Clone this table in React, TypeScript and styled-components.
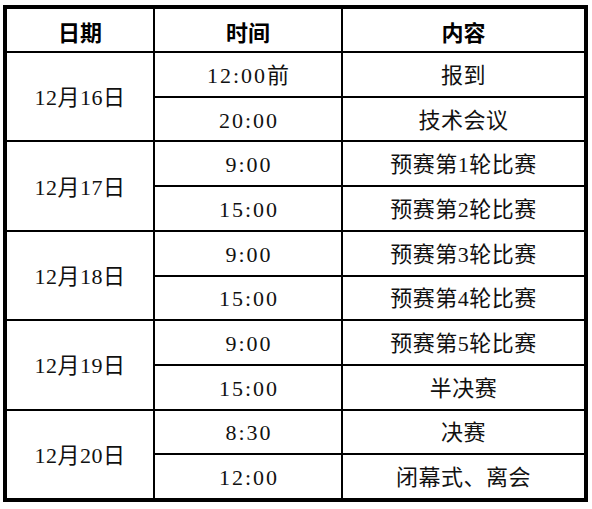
import React from "react";
import styled, { createGlobalStyle } from "styled-components";

const Global = createGlobalStyle`
  html, body { margin: 0; padding: 0; background: #ffffff; }
  #root { width: 592px; height: 509px; }
`;

const Page = styled.div`
  padding: 5px 0 0 3px;
  box-sizing: border-box;
  width: 592px;
  height: 509px;
  background: #ffffff;
`;

const Table = styled.div`
  box-sizing: border-box;
  width: 585px;
  height: 497px;
  border: 4px solid #000;
  background: #000;
  display: grid;
  grid-template-columns: 146px 186px 241px;
  grid-template-rows: 42px repeat(10, 1fr);
  gap: 2px;
`;

const Cell = styled.div<{ $span?: number }>`
  background: #fff;
  display: flex;
  align-items: center;
  justify-content: center;
  color: #111;
  font-family: "Liberation Serif", "Noto Sans CJK SC", serif;
  font-size: 22px;
  line-height: 1;
  padding-top: 3px;
  box-sizing: border-box;
  grid-row: ${(p) => (p.$span ? `span ${p.$span}` : "auto")};
`;

const HeadCell = styled(Cell)`
  font-family: "Noto Sans CJK SC", sans-serif;
  font-weight: 700;
  color: #000;
  padding-top: 2px;
`;

const DateCell = styled(Cell)`
  letter-spacing: 0.5px;
`;

const TimeCell = styled(Cell)`
  letter-spacing: 2px;
  padding-left: 2px;
`;

const ContentCell = styled(Cell)`
  letter-spacing: 0.5px;
`;

const data: { date: string; items: [string, string][] }[] = [
  { date: "12月16日", items: [["12:00前", "报到"], ["20:00", "技术会议"]] },
  { date: "12月17日", items: [["9:00", "预赛第1轮比赛"], ["15:00", "预赛第2轮比赛"]] },
  { date: "12月18日", items: [["9:00", "预赛第3轮比赛"], ["15:00", "预赛第4轮比赛"]] },
  { date: "12月19日", items: [["9:00", "预赛第5轮比赛"], ["15:00", "半决赛"]] },
  { date: "12月20日", items: [["8:30", "决赛"], ["12:00", "闭幕式、离会"]] },
];

export default function App() {
  return (
    <>
      <Global />
      <Page>
        <Table>
          <HeadCell>日期</HeadCell>
          <HeadCell>时间</HeadCell>
          <HeadCell>内容</HeadCell>
          {data.map((g) => (
            <React.Fragment key={g.date}>
              <DateCell $span={2}>{g.date}</DateCell>
              <TimeCell>{g.items[0][0]}</TimeCell>
              <ContentCell>{g.items[0][1]}</ContentCell>
              <TimeCell>{g.items[1][0]}</TimeCell>
              <ContentCell>{g.items[1][1]}</ContentCell>
            </React.Fragment>
          ))}
        </Table>
      </Page>
    </>
  );
}
